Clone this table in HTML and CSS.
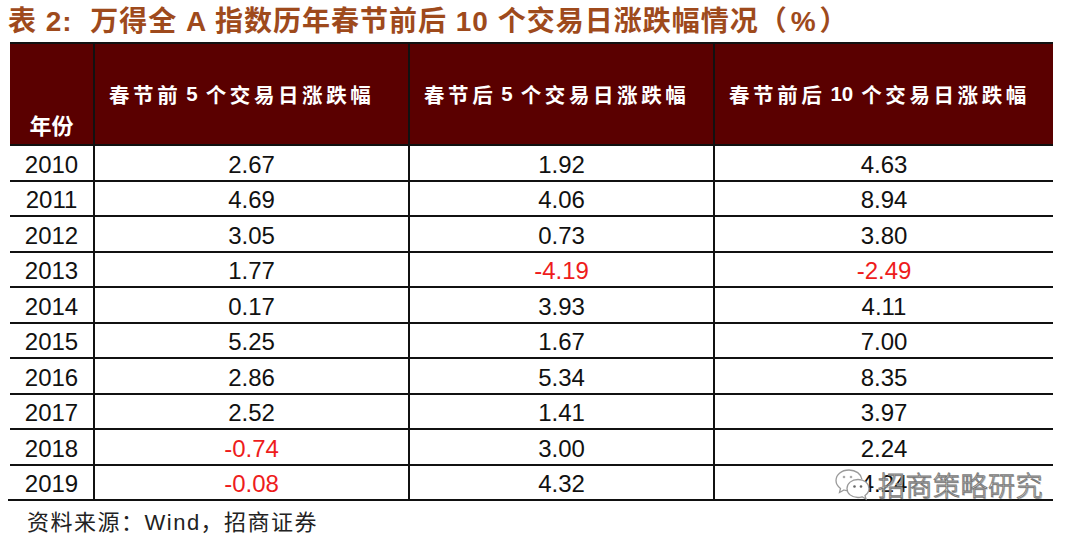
FILE: index.html
```html
<!DOCTYPE html>
<html lang="zh">
<head>
<meta charset="utf-8">
<title>表2</title>
<link rel="stylesheet" href="styles.css">
</head>
<body>
<div class="page">
  <h1 class="title">表 2:&nbsp; 万得全 A 指数历年春节前后 10 个交易日涨跌幅情况（<span class="pct">%</span>）</h1>
  <div class="table">
    <div class="row head">
      <div class="cell year-h">年份</div>
      <div class="cell h">春节前<span class="num">5</span>个交易日涨跌幅</div>
      <div class="cell h">春节后<span class="num">5</span>个交易日涨跌幅</div>
      <div class="cell h">春节前后<span class="num">10</span>个交易日涨跌幅</div>
    </div>
    <div class="row"><div class="cell">2010</div><div class="cell">2.67</div><div class="cell">1.92</div><div class="cell">4.63</div></div>
    <div class="row"><div class="cell">2011</div><div class="cell">4.69</div><div class="cell">4.06</div><div class="cell">8.94</div></div>
    <div class="row"><div class="cell">2012</div><div class="cell">3.05</div><div class="cell">0.73</div><div class="cell">3.80</div></div>
    <div class="row"><div class="cell">2013</div><div class="cell">1.77</div><div class="cell neg">-4.19</div><div class="cell neg">-2.49</div></div>
    <div class="row"><div class="cell">2014</div><div class="cell">0.17</div><div class="cell">3.93</div><div class="cell">4.11</div></div>
    <div class="row"><div class="cell">2015</div><div class="cell">5.25</div><div class="cell">1.67</div><div class="cell">7.00</div></div>
    <div class="row"><div class="cell">2016</div><div class="cell">2.86</div><div class="cell">5.34</div><div class="cell">8.35</div></div>
    <div class="row"><div class="cell">2017</div><div class="cell">2.52</div><div class="cell">1.41</div><div class="cell">3.97</div></div>
    <div class="row"><div class="cell">2018</div><div class="cell neg">-0.74</div><div class="cell">3.00</div><div class="cell">2.24</div></div>
    <div class="row last"><div class="cell">2019</div><div class="cell neg">-0.08</div><div class="cell">4.32</div><div class="cell">4.24</div></div>
  </div>
  <div class="source">资料来源：Wind，招商证券</div>
  <div class="watermark">
    <svg class="wx" width="38" height="36" viewBox="0 0 38 36">
      <path d="M15 3 C7 3 2 8 2 13.5 C2 17 4 19.5 6.5 21.5 L5.5 25.5 L10 23 C11.5 23.5 13 23.8 15 23.8" fill="none" stroke="#9a9a9a" stroke-width="1.3"/>
      <path d="M15 3 C22 3 27 7 27.8 12" fill="none" stroke="#9a9a9a" stroke-width="1.3"/>
      <path d="M24 12.5 C17.5 12.5 13 16.5 13 21.5 C13 26.5 17.5 30.5 24 30.5 C25.5 30.5 27 30.2 28 29.8 L32 32 L31 28.5 C33.5 26.8 35 24.3 35 21.5 C35 16.5 30.5 12.5 24 12.5 Z" fill="#fff" stroke="#9a9a9a" stroke-width="1.3"/>
      <circle cx="10" cy="10" r="1.3" fill="#aaa"/>
      <circle cx="17" cy="10" r="1.3" fill="#aaa"/>
      <circle cx="20.5" cy="19.5" r="1.3" fill="#666"/>
      <circle cx="27" cy="19.5" r="1.3" fill="#666"/>
    </svg>
    <span class="wm-text">招商策略研究</span>
  </div>
</div>
</body>
</html>
```
FILE: styles.css
```css
html, body {
  margin: 0;
  padding: 0;
  background: #fff;
}
.page {
  position: relative;
  width: 1080px;
  height: 534px;
  overflow: hidden;
}
.title {
  margin: 0;
  padding: 0 0 0 8px;
  height: 42px;
  line-height: 44px;
  font-family: "Liberation Sans", "Noto Sans CJK SC", sans-serif;
  font-weight: bold;
  font-size: 28px;
  letter-spacing: 1px;
  color: #9e4a1c;
  white-space: nowrap;
}
.pct {
  margin: 0 3px;
}
.table {
  margin-left: 10px;
  width: 1043px;
}
.row {
  display: grid;
  grid-template-columns: 83px 315px 305px 340px;
  height: 35.5px;
  box-sizing: border-box;
  border-bottom: 2px solid #111;
}
.row.head {
  height: 104px;
  background: #5a0000;
  border-top: 2px solid #111;
  border-bottom: 2px solid #111;
}
.row.last {
  margin-left: -2px;
  padding-left: 2px;
}
.cell {
  display: flex;
  align-items: center;
  justify-content: center;
  padding-top: 4px;
  box-sizing: border-box;
  border-left: 2px solid #111;
  font-family: "Liberation Sans", Arial, sans-serif;
  font-size: 24px;
  color: #111;
}
.cell:first-child {
  border-left: none;
}
.cell.neg {
  color: #ee1c1c;
}
.cell.h {
  justify-content: flex-start;
  padding: 0 0 0 14px;
  font-family: "Noto Sans CJK SC", sans-serif;
  font-weight: bold;
  font-size: 20.5px;
  letter-spacing: 3.6px;
  color: #fff;
}
.num {
  font-family: "Liberation Sans", sans-serif;
  letter-spacing: 0;
  margin: 0 8px 0 5px;
}
.cell.year-h {
  align-items: flex-end;
  padding: 0 0 4px 0;
  font-family: "Noto Sans CJK SC", sans-serif;
  font-weight: bold;
  font-size: 22px;
  color: #fff;
}
.source {
  padding: 3px 0 0 27px;
  font-family: "Liberation Sans", "Noto Sans CJK SC", sans-serif;
  font-size: 22px;
  letter-spacing: 1.5px;
  color: #222;
}
.watermark {
  position: absolute;
  left: 834px;
  top: 467px;
  display: flex;
  align-items: center;
  gap: 6px;
}
.wm-text {
  font-family: "Noto Sans CJK SC", sans-serif;
  font-size: 27px;
  font-weight: 300;
  color: rgba(255, 255, 255, 0.8);
  -webkit-text-stroke: 0.9px #777;
  text-shadow: 1px 1px 0 rgba(150, 150, 150, 0.6);
  letter-spacing: 0.5px;
  line-height: 36px;
}
```
